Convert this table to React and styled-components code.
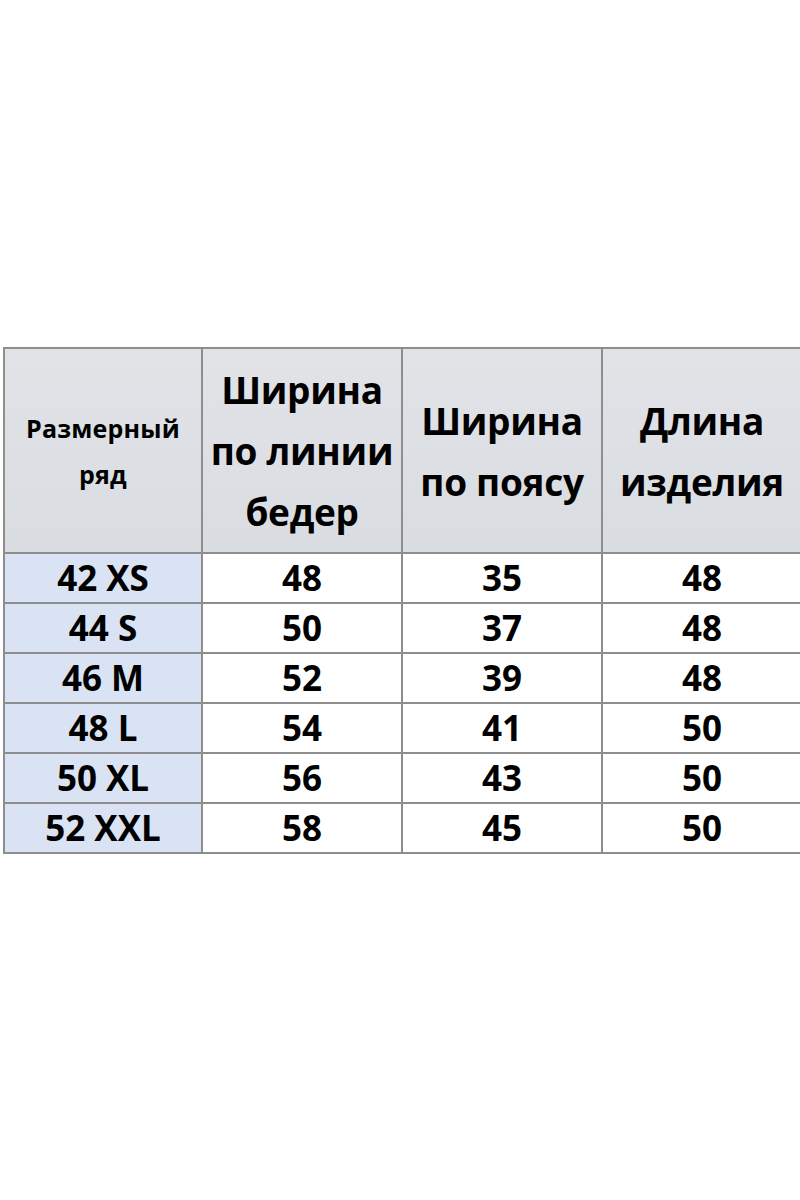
import React from 'react';
import styled, { createGlobalStyle } from 'styled-components';

const GlobalStyle = createGlobalStyle`
  html, body {
    margin: 0;
    padding: 0;
    background: #ffffff;
  }
  body {
    font-family: 'Open Sans', 'Liberation Sans', sans-serif;
    color: #000;
  }
`;

const Page = styled.div`
  width: 800px;
  height: 1200px;
  padding-top: 347px;
  box-sizing: border-box;
  overflow: hidden;
`;

const Table = styled.table`
  border-collapse: collapse;
  margin-left: 3px;
  width: 798px;
  table-layout: fixed;
`;

const HeadCell = styled.th`
  height: 203px;
  border: 2px solid #8e8e8e;
  background: linear-gradient(180deg, #e1e3e7 0%, #d9dce1 100%);
  font-weight: 700;
  font-size: ${x => (x.small ? '25px' : '37px')};
  line-height: ${x => (x.small ? '46px' : '61px')};
  letter-spacing: ${x => (x.small ? '0.2px' : '-0.3px')};
  padding: 0;
  vertical-align: middle;
`;

const Cell = styled.td`
  height: 48px;
  border: 2px solid #8e8e8e;
  background: ${x => (x.size ? '#dae3f3' : '#ffffff')};
  font-weight: 700;
  font-size: 35px;
  line-height: 46px;
  text-align: center;
  padding: 0;
`;

const rows = [
  ['42 XS', 48, 35, 48],
  ['44 S', 50, 37, 48],
  ['46 M', 52, 39, 48],
  ['48 L', 54, 41, 50],
  ['50 XL', 56, 43, 50],
  ['52 XXL', 58, 45, 50],
];

const App = () => (
  <Page>
    <GlobalStyle />
    <Table>
      <colgroup>
        <col style={{ width: 198 }} />
        <col style={{ width: 200 }} />
        <col style={{ width: 200 }} />
        <col style={{ width: 200 }} />
      </colgroup>
      <thead>
        <tr>
          <HeadCell small>
            Размерный
            <br />
            ряд
          </HeadCell>
          <HeadCell>
            Ширина
            <br />
            по линии
            <br />
            бедер
          </HeadCell>
          <HeadCell>
            Ширина
            <br />
            по поясу
          </HeadCell>
          <HeadCell>
            Длина
            <br />
            изделия
          </HeadCell>
        </tr>
      </thead>
      <tbody>
        {rows.map(r => (
          <tr key={r[0]}>
            <Cell size>{r[0]}</Cell>
            <Cell>{r[1]}</Cell>
            <Cell>{r[2]}</Cell>
            <Cell>{r[3]}</Cell>
          </tr>
        ))}
      </tbody>
    </Table>
  </Page>
);

export default App;
